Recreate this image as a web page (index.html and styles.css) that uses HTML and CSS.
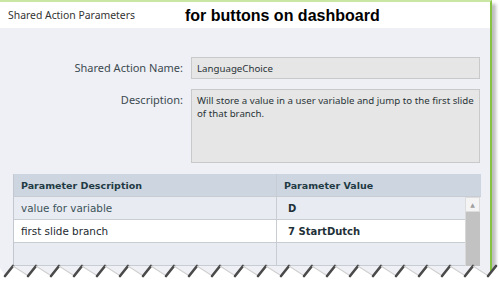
FILE: index.html
```html
<!DOCTYPE html>
<html lang="en">
<head>
    <meta charset="UTF-8">
    <title>Shared Action Parameters</title>
<link rel="stylesheet" href="styles.css">
</head>
<body>
    <div class="window">
        <header class="title-bar">
            <span class="dialog-title">Shared Action Parameters</span>
            <span class="note">for buttons on dashboard</span>
        </header>

        <main class="panel">
            <div class="form">
                <label class="field-label">Shared Action Name:</label>
                <div class="field-box name-box">LanguageChoice</div>
                <label class="field-label">Description:</label>
                <div class="field-box desc-box">Will store a value in a user variable and jump to the first slide of that branch.</div>
            </div>

            <div class="grid">
                <div class="grid-row grid-head">
                    <div class="cell col-desc">Parameter Description</div>
                    <div class="cell col-value">Parameter Value</div>
                    <div class="cell col-pad"></div>
                </div>
                <div class="grid-body">
                    <div class="rows">
                        <div class="grid-row alt">
                            <div class="cell col-desc">value for variable</div>
                            <div class="cell col-value value">D</div>
                        </div>
                        <div class="grid-row selected">
                            <div class="cell col-desc dark">first slide branch</div>
                            <div class="cell col-value value">7 StartDutch</div>
                        </div>
                        <div class="grid-row alt">
                            <div class="cell col-desc"></div>
                            <div class="cell col-value"></div>
                        </div>
                    </div>
                    <div class="scrollbar">
                        <div class="scroll-btn">&#9650;</div>
                        <div class="scroll-thumb"></div>
                    </div>
                </div>
            </div>
        </main>

        <!-- torn edge from the screen capture -->
        <svg class="torn" width="500" height="24" viewBox="0 0 500 24">
            <path d="M0 24 L0 8 L5 15 L13 5 L28 15 L36 5 L51 15 L59 5 L74 15 L82 5 L97 15 L105 5 L120 15 L128 5 L143 15 L151 5 L166 15 L174 5 L189 15 L197 5 L212 15 L220 5 L235 15 L243 5 L258 15 L266 5 L281 15 L289 5 L304 15 L312 5 L327 15 L335 5 L350 15 L358 5 L373 15 L381 5 L396 15 L404 5 L419 15 L427 5 L442 15 L450 5 L465 15 L473 5 L488 15 L496 5 L500 10 L500 24 Z" fill="#ffffff"/>
            <path d="M5 16 L13 6 M28 16 L36 6 M51 16 L59 6 M74 16 L82 6 M97 16 L105 6 M120 16 L128 6 M143 16 L151 6 M166 16 L174 6 M189 16 L197 6 M212 16 L220 6 M235 16 L243 6 M258 16 L266 6 M281 16 L289 6 M304 16 L312 6 M327 16 L335 6 M350 16 L358 6 M373 16 L381 6 M396 16 L404 6 M419 16 L427 6 M442 16 L450 6 M465 16 L473 6 M488 16 L496 6" stroke="#4a4a4a" stroke-width="2.6" stroke-linecap="round" fill="none"/>
            <path d="M13 6 L27 15 M36 6 L50 15 M59 6 L73 15 M82 6 L96 15 M105 6 L119 15 M128 6 L142 15 M151 6 L165 15 M174 6 L188 15 M197 6 L211 15 M220 6 L234 15 M243 6 L257 15 M266 6 L280 15 M289 6 L303 15 M312 6 L326 15 M335 6 L349 15 M358 6 L372 15 M381 6 L395 15 M404 6 L418 15 M427 6 L441 15 M450 6 L464 15 M473 6 L487 15" stroke="#cfcfcf" stroke-width="1.2" fill="none"/>
        </svg>
    </div>
</body>
</html>
```

FILE: styles.css
```css
/* General Styles */
body {
    margin: 0;
    padding: 0;
    width: 500px;
    height: 281px;
    overflow: hidden;
    background-color: #ffffff;
    font-family: "Noto Sans", "DejaVu Sans", sans-serif;
}

.window {
    position: relative;
    width: 490px;
    height: 279px;
    border-top: 2px solid #c9e7a3;
    border-right: 2px solid #86c341;
    box-shadow: 4px 4px 3px rgba(0, 0, 0, 0.25);
    background-color: #eff0f5;
    display: flex;
    flex-direction: column;
}

.title-bar {
    height: 26px;
    background-color: #ffffff;
    display: flex;
    align-items: center;
    padding-left: 8px;
}

.dialog-title {
    font-size: 10.4px;
    color: #333333;
    width: 177px;
}

.note {
    font-family: "Liberation Sans", Arial, sans-serif;
    font-weight: bold;
    font-size: 16px;
    color: #000000;
    padding-top: 2px;
}

/* Middle Content Section */
.panel {
    flex: 1;
    padding: 29px 0 0 13px;
}

.form {
    display: grid;
    grid-template-columns: 170px 289px;
    column-gap: 8px;
    row-gap: 10px;
    margin-bottom: 11px;
}

.field-label {
    font-size: 11px;
    color: #3c4a50;
    text-align: right;
    padding-top: 3px;
}

.field-box {
    background-color: #e6e6e6;
    border: 1px solid #c9c9c9;
    font-size: 9.7px;
    color: #2a3438;
    padding: 4px 2px 4px 5px;
    box-sizing: border-box;
}

.name-box {
    height: 22px;
}

.desc-box {
    height: 74px;
    line-height: 13px;
}

/* Parameter grid */
.grid {
    width: 467px;
    border-left: 1px solid #c3c8d0;
    font-family: "DejaVu Sans", Verdana, sans-serif;
    font-size: 10.4px;
    color: #3b5259;
}

.grid-row {
    display: flex;
    height: 23px;
    border-bottom: 1px solid #c8ccd3;
    box-sizing: border-box;
}

.grid-head {
    background-color: #cdd5e0;
    font-weight: bold;
    font-size: 9.5px;
    color: #1f3a44;
}

.cell {
    display: flex;
    align-items: center;
    padding-left: 7px;
    box-sizing: border-box;
}

.col-desc {
    width: 263px;
    border-right: 1px solid #c8ccd3;
}

.col-value {
    width: 188px;
}

.col-pad {
    flex: 1;
    padding: 0;
}

.grid-body {
    display: flex;
}

.rows {
    width: 451px;
}

.alt {
    background-color: #e8ebf1;
}

.selected {
    background-color: #ffffff;
}

.dark {
    color: #1c2a30;
}

.value {
    font-weight: bold;
    font-size: 10px;
    color: #1f3138;
    padding-left: 11px;
}

.scrollbar {
    width: 15px;
    display: flex;
    flex-direction: column;
    background-color: #e8e8e8;
}

.scroll-btn {
    height: 15px;
    background-color: #f4f4f4;
    border: 1px solid #dcdcdc;
    box-sizing: border-box;
    color: #a0a0a0;
    font-size: 6px;
    text-align: center;
    line-height: 13px;
}

.scroll-thumb {
    flex: 1;
    background-color: #c2c2c2;
    border-left: 1px solid #d8d8d8;
}

/* Utility */
.torn {
    position: absolute;
    left: 0;
    top: 258px;
}
```
